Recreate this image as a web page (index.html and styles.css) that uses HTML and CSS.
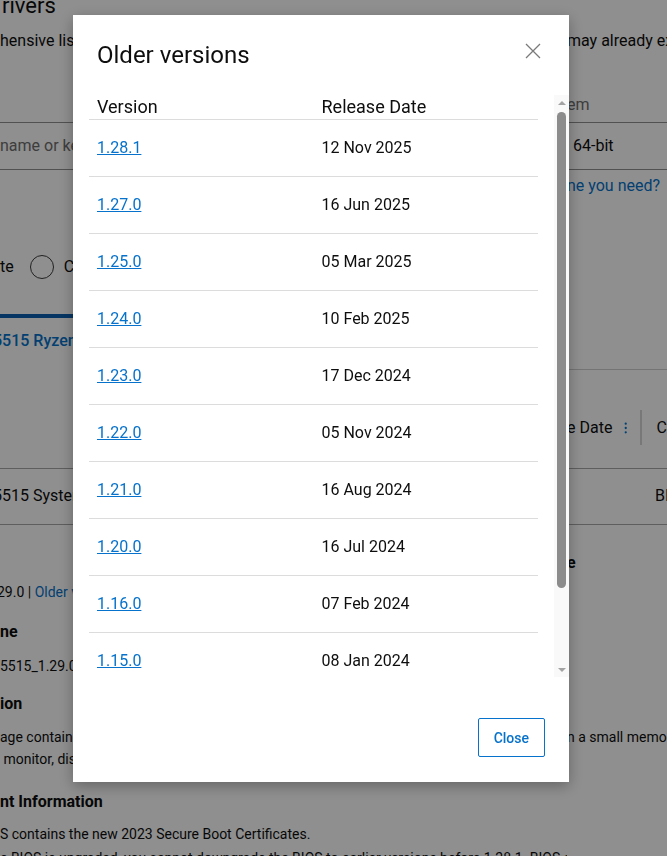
FILE: index.html
```html
<!DOCTYPE html>
<html lang="en">
<head>
    <meta charset="UTF-8">
    <title>Older versions</title>
    <link rel="stylesheet" href="styles.css">
</head>
<body>
<div class="page">
    <div class="band title-band">
        <div class="l"><h1 class="page-title">rivers</h1></div>
        <div class="r"></div>
    </div>
    <div class="band intro">
        <div class="l">hensive list of drivers for your product</div>
        <div class="r">may already exist</div>
    </div>
    <div class="band field-label">
        <div class="l"></div>
        <div class="r muted">em</div>
    </div>
    <div class="band field">
        <div class="l placeholder">name or keyword</div>
        <div class="r"><span class="os">64-bit</span></div>
    </div>
    <div class="band help">
        <div class="l"></div>
        <div class="r link">ne you need?</div>
    </div>
    <div class="band radios">
        <div class="l">te<span class="radio"></span>Choose</div>
        <div class="r"></div>
    </div>
    <div class="band tabs">
        <div class="l"><span class="tab-bar"></span></div>
        <div class="r"></div>
    </div>
    <div class="band product">
        <div class="l link"><span class="shift">5515 Ryzen 7</span></div>
        <div class="r"></div>
    </div>
    <div class="band rule-right">
        <div class="l"></div>
        <div class="r"></div>
    </div>
    <div class="band thead">
        <div class="l"></div>
        <div class="r">e Date
            <svg class="kebab" width="4" height="14" viewBox="0 0 4 14"><circle cx="2" cy="2" r="1.3"/><circle cx="2" cy="7" r="1.3"/><circle cx="2" cy="12" r="1.3"/></svg>
            <span class="sep"></span>C
        </div>
    </div>
    <div class="band rule rule-a"></div>
    <div class="band file-row">
        <div class="l"><span class="shift">5515 System BIOS</span></div>
        <div class="r"><span class="bi">BI</span></div>
    </div>
    <div class="band rule rule-b"></div>
    <div class="band side-head">
        <div class="l"></div>
        <div class="r strong">e</div>
    </div>
    <div class="band small version">
        <div class="l"><span class="shift-s">29.0 | <span class="link">Older versions</span></span></div>
        <div class="r"></div>
    </div>
    <div class="band heading h-file">
        <div class="l">ne</div>
        <div class="r"></div>
    </div>
    <div class="band small file-name">
        <div class="l">5515_1.29.0.exe</div>
        <div class="r"></div>
    </div>
    <div class="band heading h-desc">
        <div class="l">ion</div>
        <div class="r"></div>
    </div>
    <div class="band small desc">
        <div class="l">age contains the latest BIOS<br>&nbsp;monitor, display and</div>
        <div class="r">n a small memory</div>
    </div>
    <div class="band heading h-info">
        <div class="l">nt Information</div>
        <div class="r"></div>
    </div>
    <div class="band small info-1">
        <div class="l">S contains the new 2023 Secure Boot Certificates.</div>
        <div class="r"></div>
    </div>
    <div class="band small info-2">
        <div class="l wide">e BIOS is upgraded, you cannot downgrade the BIOS to earlier versions before 1.28.1. BIOS downgrades are not supported.</div>
    </div>
</div>

<div class="backdrop"></div>

<div class="modal">
    <div class="modal-head">
        <h2 class="modal-title">Older versions</h2>
        <button class="icon-close" aria-label="Close">
            <svg width="16" height="16" viewBox="0 0 16 16"><path d="M1 1L15 15M15 1L1 15"/></svg>
        </button>
    </div>
    <div class="modal-body">
        <div class="table-wrap">
            <table class="versions">
                <thead>
                <tr><th>Version</th><th>Release Date</th></tr>
                </thead>
                <tbody>
                <tr><td><a href="#">1.28.1</a></td><td>12 Nov 2025</td></tr>
                <tr><td><a href="#">1.27.0</a></td><td>16 Jun 2025</td></tr>
                <tr><td><a href="#">1.25.0</a></td><td>05 Mar 2025</td></tr>
                <tr><td><a href="#">1.24.0</a></td><td>10 Feb 2025</td></tr>
                <tr><td><a href="#">1.23.0</a></td><td>17 Dec 2024</td></tr>
                <tr><td><a href="#">1.22.0</a></td><td>05 Nov 2024</td></tr>
                <tr><td><a href="#">1.21.0</a></td><td>16 Aug 2024</td></tr>
                <tr><td><a href="#">1.20.0</a></td><td>16 Jul 2024</td></tr>
                <tr><td><a href="#">1.16.0</a></td><td>07 Feb 2024</td></tr>
                <tr><td><a href="#">1.15.0</a></td><td>08 Jan 2024</td></tr>
                <tr><td><a href="#">1.14.0</a></td><td>12 Dec 2023</td></tr>
                </tbody>
            </table>
        </div>
        <div class="scrollbar">
            <span class="sb-btn"><i class="arrow-up"></i></span>
            <span class="sb-track"><i class="sb-thumb"></i></span>
            <span class="sb-btn"><i class="arrow-down"></i></span>
        </div>
    </div>
    <div class="modal-foot">
        <button class="btn-close">Close</button>
    </div>
</div>
</body>
</html>
```

FILE: styles.css
```css
* {
    box-sizing: border-box;
}

body {
    margin: 0;
    height: 856px;
    overflow: hidden;
    background: #fff;
    color: #0e0e0e;
    font-family: Roboto, "Liberation Sans", sans-serif;
    font-size: 16px;
}

/* page behind the dialog */
.page {
    width: 667px;
}

.band {
    display: grid;
    grid-template-columns: 567px 100px;
    white-space: nowrap;
    line-height: 24px;
}

.band > div {
    overflow: hidden;
}

.l .wide {
    overflow: visible;
}

.link {
    color: #0672cb;
}

.strong {
    font-weight: 700;
}

.muted {
    color: #6e6e6e;
}

.shift {
    display: inline-block;
    margin-left: -7px;
}

.shift-s {
    display: inline-block;
    margin-left: -3px;
}

.page-title {
    margin: 0 0 0 2px;
    font-size: 22px;
    font-weight: 400;
    line-height: 28px;
}

.title-band {
    margin-top: -8px;
}

.intro {
    margin-top: 9px;
}

.field-label {
    margin-top: 42px;
    line-height: 20px;
}

.field {
    margin-top: 7px;
    border-top: 1px solid #919191;
    border-bottom: 1px solid #919191;
    line-height: 46px;
}

.placeholder {
    color: #6e6e6e;
}

.os {
    margin-left: 6px;
}

.help {
    margin-top: 4px;
}

.radios {
    margin-top: 57px;
}

.radios .l {
    display: flex;
    align-items: center;
}

.radio {
    width: 24px;
    height: 24px;
    margin: 0 10px 0 16px;
    border: 1px solid #3c3c3c;
    border-radius: 50%;
}

.tabs {
    margin-top: 35px;
}

.tab-bar {
    display: block;
    height: 4px;
    background: #0b5fb0;
}

.product {
    margin-top: 11px;
    font-weight: 500;
}

.rule-right {
    margin-top: 16px;
}

.rule-right .r {
    border-top: 1px solid #cfcfcf;
}

.thead {
    margin-top: 40px;
    line-height: 35px;
}

.thead .r {
    display: flex;
    align-items: center;
}

.kebab {
    margin-left: 12px;
    fill: #0672cb;
}

.sep {
    width: 2px;
    height: 35px;
    margin: 0 15px 0 12px;
    background: #d6d6d6;
}

.rule {
    display: block;
    height: 0;
    border-top: 1px solid #a8a8a8;
}

.rule-a {
    margin-top: 23px;
}

.file-row {
    margin-top: 15px;
}

.bi {
    margin-left: 88px;
}

.rule-b {
    margin-top: 16px;
}

.side-head {
    margin-top: 26px;
}

.small {
    font-size: 14px;
    line-height: 20px;
}

.heading {
    font-weight: 700;
}

.version {
    margin-top: 7px;
}

.h-file {
    margin-top: 18px;
}

.file-name {
    margin-top: 12px;
}

.h-desc {
    margin-top: 16px;
}

.desc {
    margin-top: 10px;
    line-height: 22px;
}

.h-info {
    margin-top: 20px;
}

.info-1 {
    margin-top: 10px;
}

.info-2 {
    margin-top: 4px;
}

/* dialog */
.backdrop {
    position: fixed;
    inset: 0;
    background: rgba(0, 0, 0, 0.44);
}

.modal {
    position: fixed;
    left: 73px;
    top: 15px;
    width: 496px;
    height: 767px;
    display: flex;
    flex-direction: column;
    background: #fff;
    box-shadow: 0 4px 14px rgba(0, 0, 0, 0.3);
}

.modal-head {
    display: flex;
    justify-content: space-between;
    align-items: flex-start;
    padding: 24px 24px 0;
}

.modal-title {
    margin: 0;
    font-size: 24px;
    font-weight: 400;
    line-height: 32px;
    color: #0e0e0e;
}

.icon-close {
    width: 24px;
    height: 24px;
    padding: 0;
    border: 0;
    background: none;
    display: flex;
    align-items: center;
    justify-content: center;
}

.icon-close svg {
    stroke: #7a7a7a;
    stroke-width: 1.3;
    fill: none;
}

.modal-body {
    display: flex;
    height: 582px;
    margin: 24px 0 0 16px;
}

.table-wrap {
    flex: 1;
    overflow: hidden;
    padding-right: 16px;
}

.versions {
    width: 100%;
    table-layout: fixed;
    border-collapse: separate;
    border-spacing: 0;
}

.versions th {
    padding: 0 8px;
    text-align: left;
    font-size: 18px;
    font-weight: 400;
    line-height: 24px;
    border-bottom: 1px solid #dcdcdc;
}

.versions td {
    padding: 16px 8px;
    line-height: 24px;
    border-bottom: 1px solid #dcdcdc;
}

.versions a {
    color: #0672cb;
}

/* scroll bar as drawn by the browser */
.scrollbar {
    width: 15px;
    display: flex;
    flex-direction: column;
    background: #f9f9f9;
}

.sb-btn {
    height: 15px;
    display: flex;
    align-items: center;
    justify-content: center;
}

.arrow-up {
    border-left: 4px solid transparent;
    border-right: 4px solid transparent;
    border-bottom: 4px solid #a3a3a3;
}

.arrow-down {
    border-left: 4px solid transparent;
    border-right: 4px solid transparent;
    border-top: 4px solid #a3a3a3;
}

.sb-track {
    flex: 1;
    padding: 2px 3px 0;
}

.sb-thumb {
    display: block;
    height: 476px;
    background: #8c8c8c;
    border-radius: 5px;
}

.modal-foot {
    margin-top: auto;
    display: flex;
    justify-content: flex-end;
    padding: 0 24px 25px;
}

.btn-close {
    height: 39px;
    padding: 0 15px;
    border: 1px solid #0672cb;
    border-radius: 2px;
    background: #fff;
    color: #0672cb;
    font-family: Roboto, "Liberation Sans", sans-serif;
    font-size: 14px;
    font-weight: 500;
}
```
